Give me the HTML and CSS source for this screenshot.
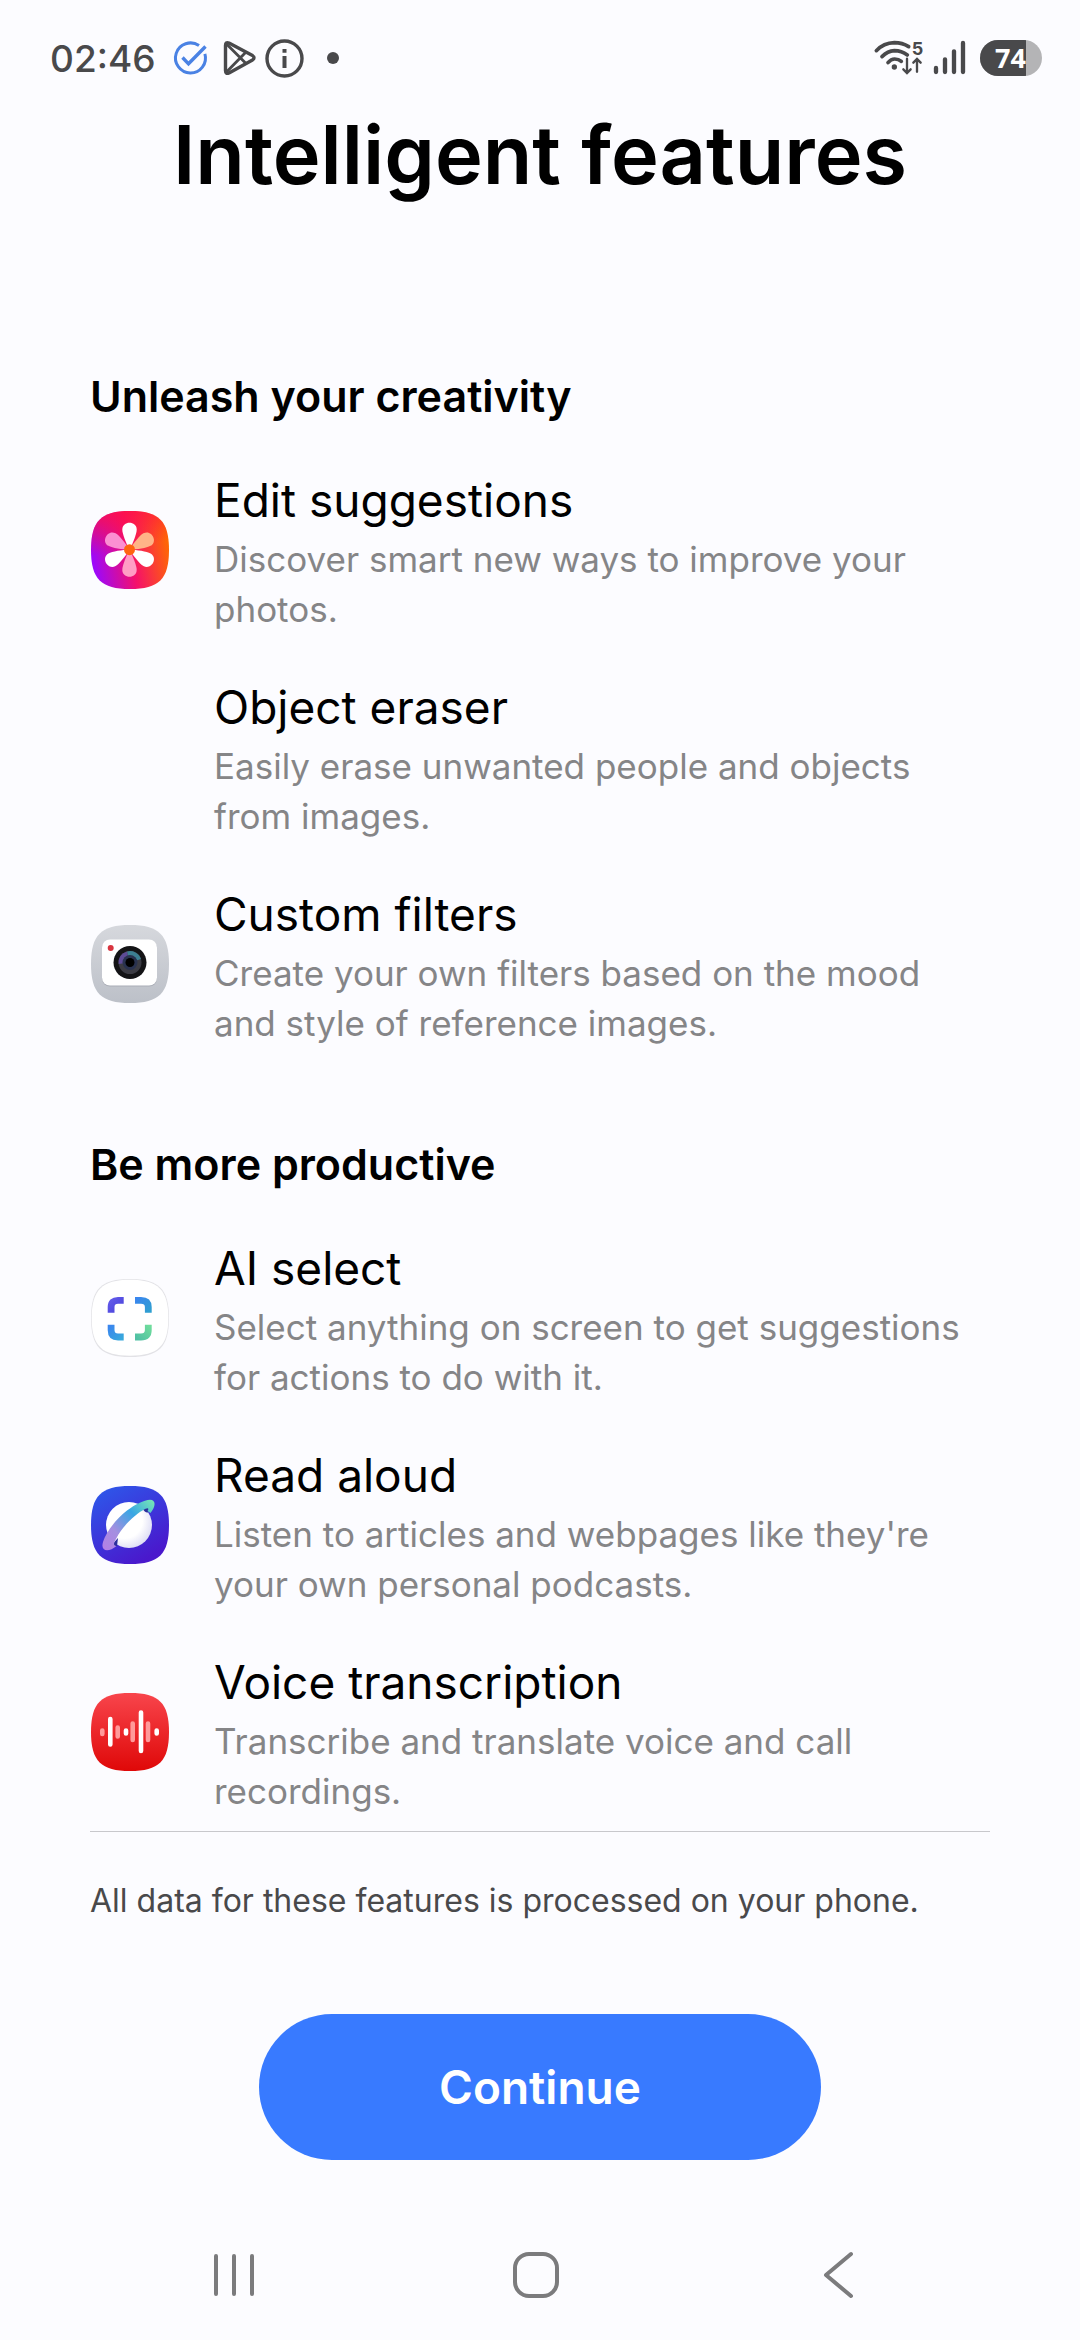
FILE: index.html
```html
<!DOCTYPE html>
<html lang="en">
<head>
  <meta charset="utf-8">
  <meta name="viewport" content="width=device-width, initial-scale=1.0">
  <title>Intelligent features</title>
  <link rel="stylesheet" href="styles.css">
</head>
<body>
  <header class="status-bar">
    <div class="status-left">
      <time class="clock">02:46</time>
      <svg width="40" height="40" viewBox="0 0 40 40" fill="none" stroke="#4a82e4" stroke-width="3">
        <path d="M28 7.6A15 15 0 1 0 33.9 15.8"/>
        <path d="M11.5 19.5l6 6.3L34.5 8.5" stroke-width="3.4"/>
      </svg>
      <svg width="40" height="40" viewBox="0 0 40 40" fill="none" stroke="#49494b" stroke-width="3.4" stroke-linejoin="round">
        <path d="M7.500 7.5Q7.5 3.5 11 5L34.5 17.5Q37.5 19.7 34.5 22L11 35Q7.5 36.5 7.5 32.5Z"/>
        <path d="M8.5 6L28.5 26M8.5 34L28.5 13.5" stroke-width="2.8"/>
      </svg>
      <svg width="40" height="40" viewBox="0 0 40 40" fill="none" stroke="#49494b">
        <circle cx="19.5" cy="20.5" r="17.5" stroke-width="3.4"/>
        <path d="M19.5 18v12M19.5 11v3.8" stroke-width="4"/>
      </svg>
      <svg width="40" height="40" viewBox="0 0 40 40"><circle cx="21" cy="20" r="6" fill="#49494b"/></svg>
    </div>
    <div class="status-right">
      <!-- wifi -->
      <svg width="50" height="40" viewBox="66 54 150 120" fill="none" stroke="#49494b" stroke-linecap="round">
        <path d="M76 92Q98 69 130 68Q154 68 173 80" stroke-width="11"/>
        <path d="M93 110Q110 93 130 92Q152 92 169 105" stroke-width="11"/>
        <path d="M111 128Q120 117 131 117Q143 117 151 124" stroke-width="11"/>
        <circle cx="130" cy="141" r="8" fill="#49494b" stroke="none"/>
        <path d="M168 116v42M157 148l11 11l11-11M198 155v-36M187 128l11-11l11 11" stroke-width="7"/>
        <text class="wifi-band" x="182" y="104">5</text>
      </svg>
      <!-- signal -->
      <svg width="37" height="40" viewBox="246 54 111 120" stroke="#49494b" stroke-width="13" stroke-linecap="round">
        <path d="M255 144v12M282 118v38M309 94v62M336 69v87"/>
      </svg>
      <div class="battery"><span class="battery-level">74</span></div>
    </div>
  </header>

  <main class="content">
    <h1>Intelligent features</h1>

    <section class="group">
      <h2>Unleash your creativity</h2>
      <ul class="features">
        <li class="feature">
          <svg class="app-icon" viewBox="0 0 80 80">
            <defs>
              <linearGradient id="gallery" x1="0" y1="0.6" x2="1" y2="0.4">
                <stop offset="0" stop-color="#9a08ff"/>
                <stop offset="0.5" stop-color="#f5106a"/>
                <stop offset="1" stop-color="#ff6a00"/>
              </linearGradient>
              <linearGradient id="galleryTop" x1="0.3" y1="0" x2="0.5" y2="1">
                <stop offset="0" stop-color="#ff0f48" stop-opacity="0.8"/>
                <stop offset="0.5" stop-color="#ff1040" stop-opacity="0"/>
              </linearGradient>
              <path id="squircle" d="M40 1C69 1 79 11 79 40S69 79 40 79S1 69 1 40S11 1 40 1Z"/>
              <path id="petal" d="M39.5 40C36 33 32.3 24 32.3 19.5C32.3 10.5 46.7 10.5 46.7 19.5C46.7 24 43 33 39.5 40Z"/>
            </defs>
            <use href="#squircle" fill="url(#gallery)"/>
            <use href="#squircle" fill="url(#galleryTop)"/>
            <use href="#petal" fill="#ffb487" transform="rotate(60 39.5 39.7)"/>
            <use href="#petal" fill="#ff9dc4" transform="rotate(180 39.5 39.7)"/>
            <use href="#petal" fill="#fb8fd2" transform="rotate(300 39.5 39.7)"/>
            <use href="#petal" fill="#fff"/>
            <use href="#petal" fill="#fff" transform="rotate(120 39.5 39.7)"/>
            <use href="#petal" fill="#fff" transform="rotate(240 39.5 39.7)"/>
            <circle cx="39.5" cy="39.7" r="5.5" fill="#ff6410"/>
          </svg>
          <div class="feature-text">
            <h3>Edit suggestions</h3>
            <p>Discover smart new ways to improve your photos.</p>
          </div>
        </li>
        <li class="feature">
          <span class="app-icon"></span>
          <div class="feature-text">
            <h3>Object eraser</h3>
            <p>Easily erase unwanted people and objects from images.</p>
          </div>
        </li>
        <li class="feature">
          <svg class="app-icon" viewBox="0 0 80 80">
            <defs>
              <linearGradient id="camera" x1="0" y1="0" x2="0" y2="1">
                <stop offset="0" stop-color="#d6d8dd"/>
                <stop offset="1" stop-color="#bcc0c8"/>
              </linearGradient>
            </defs>
            <use href="#squircle" fill="url(#camera)"/>
            <rect x="12" y="16.5" width="55" height="46" rx="8" fill="#a9adb6"/>
            <rect x="12" y="15.5" width="55" height="46" rx="8" fill="#fff"/>
            <circle cx="20.7" cy="24" r="3" fill="#d8353f"/>
            <circle cx="40" cy="38.5" r="16.5" fill="#141416"/>
            <circle cx="40" cy="38.5" r="11.5" fill="#3c3c44"/>
            <path d="M40 38.5L28.6 40A11.5 11.5 0 0 1 37 27.4Z" fill="#5d4b96"/>
            <path d="M40 38.5L37 27.4A11.5 11.5 0 0 1 51 35Z" fill="#3c7f92"/>
            <circle cx="40" cy="38.5" r="7.5" fill="#29324f"/>
            <circle cx="40" cy="38.5" r="4.5" fill="#000"/>
          </svg>
          <div class="feature-text">
            <h3>Custom filters</h3>
            <p>Create your own filters based on the mood and style of reference images.</p>
          </div>
        </li>
      </ul>
    </section>

    <section class="group">
      <h2>Be more productive</h2>
      <ul class="features">
        <li class="feature">
          <svg class="app-icon" viewBox="0 0 80 80" fill="none">
            <defs>
              <linearGradient id="tl" x1="0" y1="0" x2="1" y2="1">
                <stop offset="0" stop-color="#6058e8"/><stop offset="1" stop-color="#4640d8"/>
              </linearGradient>
              <linearGradient id="tr" x1="0" y1="0" x2="1" y2="1">
                <stop offset="0" stop-color="#3a86ee"/><stop offset="1" stop-color="#2f9fd0"/>
              </linearGradient>
              <linearGradient id="bl" x1="0" y1="0" x2="1" y2="1">
                <stop offset="0" stop-color="#3a86ee"/><stop offset="1" stop-color="#38a8dc"/>
              </linearGradient>
              <linearGradient id="br" x1="1" y1="0" x2="0" y2="1">
                <stop offset="0" stop-color="#6fdc9c"/><stop offset="1" stop-color="#50c0a4"/>
              </linearGradient>
            </defs>
            <use href="#squircle" fill="#e2e2e6"/>
            <path d="M40 1.7C68.3 1.7 78.3 12 78.3 40S68 77.7 40 77.7S1.7 68 1.7 40S12 1.7 40 1.7Z" fill="#fff"/>
            <g stroke-width="6.8">
              <path d="M21.1 34.7V29Q21.1 22.3 28 22.3H33.7" stroke="url(#tl)"/>
              <path d="M45 22.3H51Q58.3 22.3 58.3 29V34.7" stroke="url(#tr)"/>
              <path d="M21.1 46.7V52Q21.1 59 28 59H33.7" stroke="url(#bl)"/>
              <path d="M45 59H51Q58.3 59 58.3 52V46.7" stroke="url(#br)"/>
            </g>
          </svg>
          <div class="feature-text">
            <h3>AI select</h3>
            <p>Select anything on screen to get suggestions for actions to do with it.</p>
          </div>
        </li>
        <li class="feature">
          <svg class="app-icon" viewBox="0 0 80 80">
            <defs>
              <linearGradient id="browser" x1="0" y1="0" x2="0.6" y2="1">
                <stop offset="0" stop-color="#2b5cec"/>
                <stop offset="1" stop-color="#4a18cc"/>
              </linearGradient>
              <linearGradient id="ring" gradientUnits="userSpaceOnUse" x1="13" y1="64" x2="64" y2="15">
                <stop offset="0" stop-color="#b47fe6"/>
                <stop offset="0.3" stop-color="#a48fe0"/>
                <stop offset="0.65" stop-color="#38a6e4"/>
                <stop offset="1" stop-color="#78e8b4"/>
              </linearGradient>
              <radialGradient id="planet" cx="0.4" cy="0.4" r="0.65">
                <stop offset="0.6" stop-color="#fff"/>
                <stop offset="1" stop-color="#dcdcf4"/>
              </radialGradient>
            </defs>
            <use href="#squircle" fill="url(#browser)"/>
            <circle cx="39" cy="40" r="23" fill="url(#planet)"/>
            <path d="M52 23Q60 20 58.5 27Q56 29 52 23ZM28 53Q19 62 27 61Z" fill="#2b2f9c"/>
            <path d="M13 57C16 47 27 33 37 25.500C45 19.500 54 15 60 14.700C66 14.700 66 21 60.500 28L57.500 26C59 23.500 58.500 22.500 55.500 23.800C45 29 32 42 26.500 53C24 57.500 22.500 60.500 26.500 61C19 67.500 10 67 13 57Z" fill="url(#ring)"/>
          </svg>
          <div class="feature-text">
            <h3>Read aloud</h3>
            <p>Listen to articles and webpages like they're your own personal podcasts.</p>
          </div>
        </li>
        <li class="feature">
          <svg class="app-icon" viewBox="0 0 80 80">
            <defs>
              <linearGradient id="recorder" x1="0" y1="0" x2="0" y2="1">
                <stop offset="0" stop-color="#f8454c"/>
                <stop offset="1" stop-color="#df0808"/>
              </linearGradient>
            </defs>
            <use href="#squircle" fill="url(#recorder)"/>
            <g stroke-linecap="round" stroke-width="4.6">
              <path d="M12.3 38.5v3.5M27.7 35.5v9M42.7 31.5v16.500M58 31.5v16.5" stroke="#ff9a9a"/>
              <path d="M20.3 27v25.5M36 38.5v3M51 20.5v38.5M66.7 38.5v3" stroke="#fff"/>
            </g>
          </svg>
          <div class="feature-text">
            <h3>Voice transcription</h3>
            <p>Transcribe and translate voice and call recordings.</p>
          </div>
        </li>
      </ul>
    </section>
  </main>

  <footer class="bottom">
    <p class="notice">All data for these features is processed on your phone.</p>
    <button type="button" class="continue">Continue</button>
  </footer>

  <nav class="nav-bar">
    <button type="button" aria-label="Recent apps">
      <svg width="48" height="48" viewBox="0 0 48 48" stroke="#7b7b7d" stroke-width="4" stroke-linecap="round">
        <path d="M6 5v38M24 5v38M42 5v38"/>
      </svg>
    </button>
    <button type="button" aria-label="Home">
      <svg width="48" height="48" viewBox="0 0 48 48" fill="none" stroke="#7b7b7d" stroke-width="4">
        <rect x="3" y="3" width="42" height="42" rx="14"/>
      </svg>
    </button>
    <button type="button" aria-label="Back">
      <svg width="48" height="48" viewBox="0 0 48 48" fill="none" stroke="#7b7b7d" stroke-width="4" stroke-linecap="round" stroke-linejoin="round">
        <path d="M37 3L12 24L37 45"/>
      </svg>
    </button>
  </nav>
</body>
</html>
```
FILE: styles.css
```css
* {
  box-sizing: border-box;
}
body {
  margin: 0;
  min-height: 100vh;
  display: flex;
  flex-direction: column;
  background-color: #fcfcff;
  color: #000;
  font-family: Inter, Roboto, sans-serif;
}
h1, h2, h3, p, ul {
  margin: 0;
  padding: 0;
}
svg {
  display: block;
  flex-shrink: 0;
}
button {
  border: none;
  background: none;
  padding: 0;
  font-family: inherit;
  cursor: pointer;
}

/* status bar */
.status-bar {
  display: flex;
  justify-content: space-between;
  align-items: center;
  height: 106px;
  padding: 10px 38px 0 50px;
}
.status-left {
  display: flex;
  align-items: center;
  gap: 7px;
}
.clock {
  margin-right: 8px;
  font-size: 37px;
  font-weight: 500;
  color: #49494b;
}
.status-right {
  display: flex;
  align-items: center;
  gap: 10px;
}
.wifi-band {
  fill: #49494b;
  stroke: none;
  font-size: 54px;
  font-weight: 700;
}
.battery {
  width: 62px;
  height: 36px;
  border-radius: 18px;
  background-color: #b4b4b6;
  overflow: hidden;
}
.battery-level {
  display: block;
  width: 46px;
  background-color: #49494b;
  color: #fff;
  font-family: "Open Sans", sans-serif;
  font-size: 27px;
  font-weight: 700;
  line-height: 36px;
  text-align: right;
}

/* content */
.content {
  flex: 1;
  margin: 0 90px;
  padding-bottom: 15px;
  border-bottom: 1px solid #c8c8cc;
}
h1 {
  margin-bottom: 162px;
  font-size: 81px;
  line-height: 98px;
  font-weight: 600;
  text-align: center;
}
.group + .group {
  margin-top: 86px;
}
h2 {
  margin-bottom: 40px;
  font-size: 43px;
  line-height: 60px;
  font-weight: 600;
}
.features {
  display: flex;
  flex-direction: column;
  gap: 39px;
  list-style: none;
}
.feature {
  display: flex;
  align-items: center;
  gap: 44px;
}
.app-icon {
  flex-shrink: 0;
  width: 80px;
  height: 80px;
}
.feature-text {
  flex: 1;
}
h3 {
  font-size: 46px;
  line-height: 68px;
  font-weight: 400;
}
.feature-text p {
  padding-right: 10px;
  font-size: 35px;
  line-height: 50px;
  color: #858587;
}

/* footer */
.bottom {
  display: flex;
  flex-direction: column;
  padding: 45px 90px 50px;
}
.notice {
  margin-bottom: 89px;
  font-size: 32px;
  line-height: 48px;
  color: #49494b;
}
.continue {
  align-self: center;
  width: 62.5%;
  height: 146px;
  border-radius: 73px;
  background-color: #387aff;
  color: #fff;
  font-size: 46px;
  font-weight: 600;
}

/* navigation bar */
.nav-bar {
  display: flex;
  justify-content: space-between;
  align-items: center;
  height: 130px;
  padding: 0 218px 0 210px;
}
```
